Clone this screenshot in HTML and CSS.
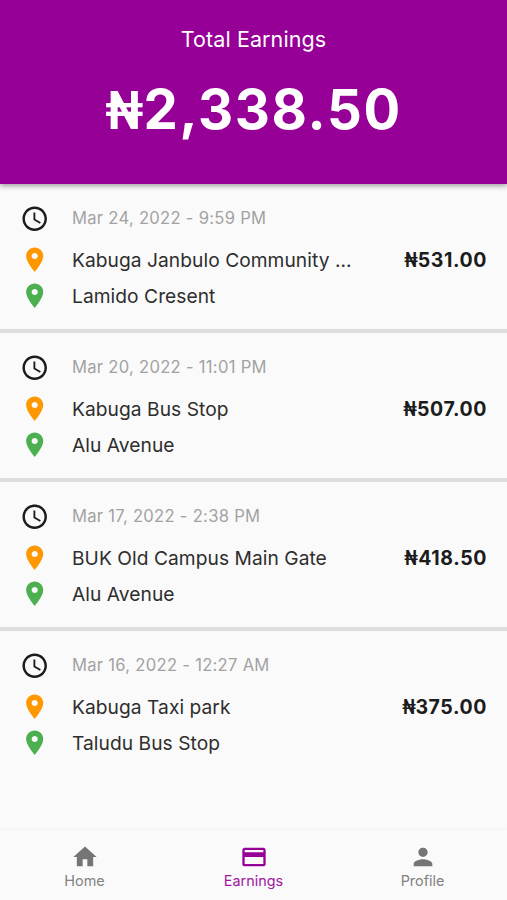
FILE: index.html
```html
<!DOCTYPE html>
<html lang="en">
<head>
<meta charset="utf-8">
<title>Total Earnings</title>
<link rel="stylesheet" href="styles.css">
</head>
<body>
<svg width="0" height="0" class="defs">
<symbol id="clock" viewBox="0 0 24 24"><path d="M11.99 2C6.47 2 2 6.48 2 12s4.47 10 9.99 10C17.52 22 22 17.52 22 12S17.52 2 11.99 2zM12 20c-4.42 0-8-3.58-8-8s3.58-8 8-8 8 3.58 8 8-3.58 8-8 8zm.5-13H11v6l5.25 3.15.75-1.23-4.5-2.67z"/></symbol>
<symbol id="pin" viewBox="0 0 24 24"><path d="M12 2C8.13 2 5 5.13 5 9c0 5.25 7 13 7 13s7-7.75 7-13c0-3.87-3.13-7-7-7zm0 9.5c-1.38 0-2.5-1.12-2.5-2.5s1.12-2.5 2.5-2.5 2.5 1.12 2.5 2.5-1.12 2.5-2.5 2.5z"/></symbol>
</svg>
<div class="app">
<header class="header">
<h1 class="title">Total Earnings</h1>
<div class="total"><span class="naira">₦</span>2,338.50</div>
</header>
<main class="list">
<article class="trip">
<svg class="clock"><use href="#clock"/></svg><time class="date">Mar 24, 2022 - 9:59 PM</time>
<svg class="pin from"><use href="#pin"/></svg><span class="place">Kabuga Janbulo Community ...</span><strong class="amount"><span class="naira">₦</span>531.00</strong>
<svg class="pin to"><use href="#pin"/></svg><span class="place">Lamido Cresent</span>
</article>
<article class="trip">
<svg class="clock"><use href="#clock"/></svg><time class="date">Mar 20, 2022 - 11:01 PM</time>
<svg class="pin from"><use href="#pin"/></svg><span class="place">Kabuga Bus Stop</span><strong class="amount"><span class="naira">₦</span>507.00</strong>
<svg class="pin to"><use href="#pin"/></svg><span class="place">Alu Avenue</span>
</article>
<article class="trip">
<svg class="clock"><use href="#clock"/></svg><time class="date">Mar 17, 2022 - 2:38 PM</time>
<svg class="pin from"><use href="#pin"/></svg><span class="place">BUK Old Campus Main Gate</span><strong class="amount"><span class="naira">₦</span>418.50</strong>
<svg class="pin to"><use href="#pin"/></svg><span class="place">Alu Avenue</span>
</article>
<article class="trip">
<svg class="clock"><use href="#clock"/></svg><time class="date">Mar 16, 2022 - 12:27 AM</time>
<svg class="pin from"><use href="#pin"/></svg><span class="place">Kabuga Taxi park</span><strong class="amount"><span class="naira">₦</span>375.00</strong>
<svg class="pin to"><use href="#pin"/></svg><span class="place">Taludu Bus Stop</span>
</article>
</main>
<nav class="nav">
<a class="tab"><svg viewBox="0 0 24 24"><path d="M10 20v-6h4v6h5v-8h3L12 3 2 12h3v8z"/></svg><span>Home</span></a>
<a class="tab active"><svg viewBox="0 0 24 24"><path d="M20 4H4c-1.11 0-1.99.89-1.99 2L2 18c0 1.11.89 2 2 2h16c1.11 0 2-.89 2-2V6c0-1.11-.89-2-2-2zm0 14H4v-6h16v6zm0-10H4V6h16v2z"/></svg><span>Earnings</span></a>
<a class="tab"><svg viewBox="0 0 24 24"><path d="M12 12c2.21 0 4-1.79 4-4s-1.79-4-4-4-4 1.79-4 4 1.79 4 4 4zm0 2c-2.67 0-8 1.34-8 4v2h16v-2c0-2.66-5.33-4-8-4z"/></svg><span>Profile</span></a>
</nav>
</div>
</body>
</html>
```
FILE: styles.css
```css
* { box-sizing: border-box; }
body { margin: 0; font-family: Inter, "Liberation Sans", sans-serif; background: #fafafa; }
.defs { display: block; }
.app { height: 900px; display: flex; flex-direction: column; overflow: hidden; background: #fafafa; }
.header { flex: none; height: 184px; background: #960096; color: #fff; text-align: center; padding-top: 24px; box-shadow: 0 2px 5px rgba(0,0,0,.36); z-index: 1; }
.title { margin: 0; font-size: 21.5px; line-height: 30px; font-weight: 400; letter-spacing: .1px; }
.total { margin-top: 20px; font-size: 54.5px; line-height: 70px; font-weight: 700; letter-spacing: 1.6px; }
.naira { display: inline-block; font-family: Roboto, sans-serif; letter-spacing: 0; transform: scaleX(.86); transform-origin: right; margin-left: -.11em; }
.list { flex: 1; }
.trip { height: 149px; padding: 16.4px 20px 0 20.4px; display: grid; grid-template-columns: 51.6px 1fr auto; grid-template-rows: 42px 35.5px 35.5px; align-content: start; align-items: center; border-bottom: 4px solid #dedede; }
.trip:last-child { border-bottom: 0; }
.clock, .pin { width: 29.4px; height: 29.4px; }
.clock { fill: #1c1c1c; margin-bottom: 6px; }
.date { grid-column: 2 / 4; margin-bottom: 6px; font-size: 16.6px; line-height: 24px; color: #a2a2a2; letter-spacing: .28px; }
.pin { fill: #ff9800; grid-column: 1; }
.to { fill: #4caf50; }
.place { font-size: 19.2px; line-height: 28px; color: #2e2e2e; letter-spacing: .05px; white-space: nowrap; }
.amount { font-size: 19.5px; line-height: 28px; color: #1c1c1c; letter-spacing: .6px; margin-top: 1px; }
.nav { flex: none; height: 70px; display: flex; box-shadow: 0 -1px 3px rgba(0,0,0,.04); }
.tab { flex: 1; display: flex; flex-direction: column; align-items: center; padding-top: 13px; color: #757575; font-size: 14.4px; line-height: 20px; }
.tab svg { width: 28px; height: 28px; fill: currentColor; }
.tab span { opacity: .9; }
.active { color: #960096; }
```
